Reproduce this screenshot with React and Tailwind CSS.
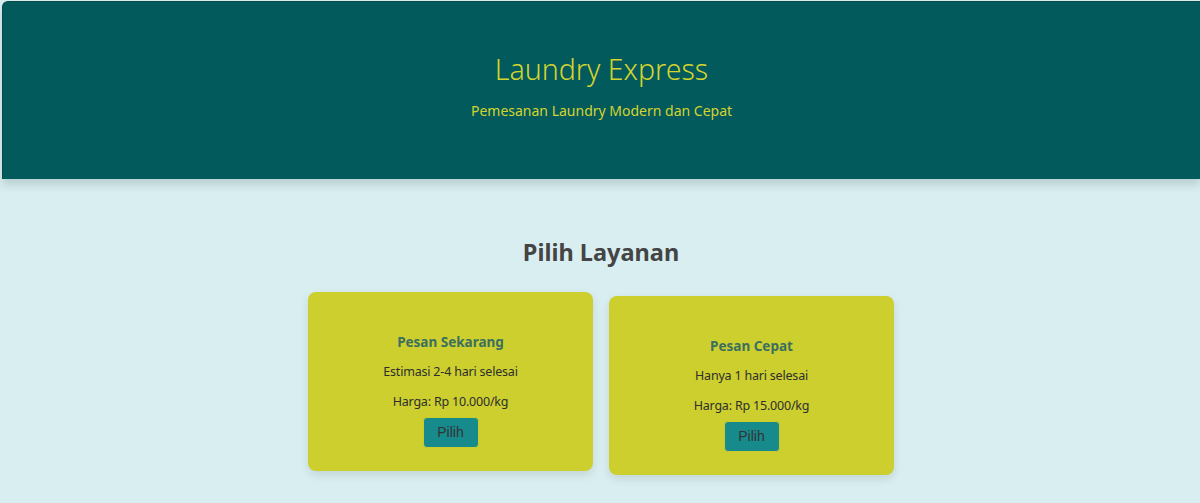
const services = [
  { title: "Pesan Sekarang", desc: "Estimasi 2-4 hari selesai", price: "Harga: Rp 10.000/kg", lifted: true },
  { title: "Pesan Cepat", desc: "Hanya 1 hari selesai", price: "Harga: Rp 15.000/kg", lifted: false },
];

function ServiceCard({ title, desc, price, lifted }) {
  return (
    <div
      className={
        "w-[285px] h-[179px] bg-[#cccf2e] rounded-lg shadow-[0_4px_10px_rgba(0,0,0,0.1)] flex flex-col items-center pt-[40px] " +
        (lifted ? "-translate-y-1" : "")
      }
    >
      <h3 className="text-[13.5px] leading-[20px] font-bold text-[#3b6f5e]">{title}</h3>
      <p className="mt-[10px] text-[12.5px] tracking-[-0.2px] leading-[19px] text-[#2e2e2e]">{desc}</p>
      <p className="mt-[11px] text-[12.5px] tracking-[-0.2px] leading-[19px] text-[#2e2e2e]">{price}</p>
      <button className="mt-[6px] w-[56px] h-[31px] bg-[#178a8c] border border-[#c9cc2e] rounded text-[14px] text-[#333] font-['Liberation_Sans',Arial,sans-serif]">
        Pilih
      </button>
    </div>
  );
}

export default function App() {
  return (
    <div className="min-h-screen bg-[#d9eef0] pl-[2px] pt-px font-['Noto_Sans',sans-serif]">
      <header className="h-[178px] bg-[#035a5c] rounded-tl-md border-l border-t border-[#0b4a4c] shadow-[0_6px_8px_rgba(0,40,40,0.15)] flex flex-col items-center text-[#d3d42f]">
        <h1 className="mt-[47px] text-[28.5px] leading-[40px] font-light">Laundry Express</h1>
        <p className="mt-[12px] text-[14px] leading-[20px]">Pemesanan Laundry Modern dan Cepat</p>
      </header>
      <main className="flex flex-col items-center">
        <h2 className="mt-[57px] text-[23.5px] leading-[32px] font-bold text-[#444]">Pilih Layanan</h2>
        <div className="mt-[28px] flex gap-[16px] items-start">
          {services.map((s) => (
            <ServiceCard key={s.title} {...s} />
          ))}
        </div>
      </main>
    </div>
  );
}
